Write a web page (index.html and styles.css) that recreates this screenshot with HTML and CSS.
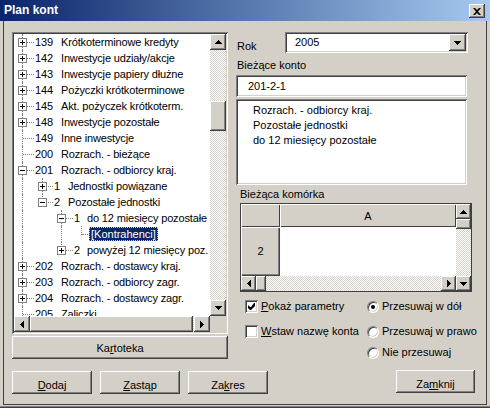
FILE: index.html
```html
<!DOCTYPE html>
<html>
<head>
<meta charset="utf-8">
<title>Plan kont</title>
<link rel="stylesheet" href="styles.css">
</head>
<body>
<div class="window">
  <div class="titlebar">
    <span class="title">Plan kont</span>
    <span class="close"><svg width="8" height="7" viewBox="0 0 8 7"><path d="M0 0h2l2 2 2-2h2L5 3.5 8 7H6L4 5 2 7H0l3-3.5z"/></svg></span>
  </div>
  <div class="client">
    <div class="main">
      <div class="leftcol">
        <div class="tree">
          <div class="tree-body">
            <div class="nodes">
              <div class="row"><i class="c w20 t"><b class="box p"></b></i><span class="lbl"><span class="n1">139</span>Krótkoterminowe kredyty</span></div>
              <div class="row"><i class="c w20 t"><b class="box p"></b></i><span class="lbl"><span class="n1">142</span>Inwestycje udziały/akcje</span></div>
              <div class="row"><i class="c w20 t"><b class="box p"></b></i><span class="lbl"><span class="n1">143</span>Inwestycje papiery dłużne</span></div>
              <div class="row"><i class="c w20 t"><b class="box p"></b></i><span class="lbl"><span class="n1">144</span>Pożyczki krótkoterminowe</span></div>
              <div class="row"><i class="c w20 t"><b class="box p"></b></i><span class="lbl"><span class="n1">145</span>Akt. pożyczek krótkoterm.</span></div>
              <div class="row"><i class="c w20 t"><b class="box p"></b></i><span class="lbl"><span class="n1">148</span>Inwestycje pozostałe</span></div>
              <div class="row"><i class="c w20 t"></i><span class="lbl"><span class="n1">149</span>Inne inwestycje</span></div>
              <div class="row"><i class="c w20 t"></i><span class="lbl"><span class="n1">200</span>Rozrach. - bieżące</span></div>
              <div class="row"><i class="c w20 t"><b class="box m"></b></i><span class="lbl"><span class="n1">201</span>Rozrach. - odbiorcy kraj.</span></div>
              <div class="row"><i class="c w20 v"></i><i class="c w19 t"><b class="box p"></b></i><span class="lbl"><span class="n2">1</span>Jednostki powiązane</span></div>
              <div class="row"><i class="c w20 v"></i><i class="c w19 e"><b class="box m"></b></i><span class="lbl"><span class="n2">2</span>Pozostałe jednostki</span></div>
              <div class="row"><i class="c w20 v"></i><i class="c w19"></i><i class="c w20 t"><b class="box m"></b></i><span class="lbl"><span class="n3">1</span>do 12 miesięcy pozostałe</span></div>
              <div class="row"><i class="c w20 v"></i><i class="c w19"></i><i class="c w20 v"></i><i class="c w19 e"></i><span class="lbl sel">[Kontrahenci]</span></div>
              <div class="row"><i class="c w20 v"></i><i class="c w19"></i><i class="c w20 e"><b class="box p"></b></i><span class="lbl"><span class="n3">2</span>powyżej 12 miesięcy poz.</span></div>
              <div class="row"><i class="c w20 t"><b class="box p"></b></i><span class="lbl"><span class="n1">202</span>Rozrach. - dostawcy kraj.</span></div>
              <div class="row"><i class="c w20 t"><b class="box p"></b></i><span class="lbl"><span class="n1">203</span>Rozrach. - odbiorcy zagr.</span></div>
              <div class="row"><i class="c w20 t"><b class="box p"></b></i><span class="lbl"><span class="n1">204</span>Rozrach. - dostawcy zagr.</span></div>
              <div class="row"><i class="c w20 t"></i><span class="lbl"><span class="n1">205</span>Zaliczki</span></div>
            </div>
            <div class="vscroll">
              <span class="sbtn s16"><svg width="7" height="4" viewBox="0 0 7 4"><path d="M3 0h1v1h1v1h1v1h1v1H0V3h1V2h1V1h1z"/></svg></span>
              <div class="vtrack"><span class="vthumb"></span></div>
              <span class="sbtn s16"><svg width="7" height="4" viewBox="0 0 7 4"><path d="M0 0h7v1H6v1H5v1H4v1H3V3H2V2H1V1H0z"/></svg></span>
            </div>
          </div>
          <div class="hscroll">
            <span class="sbtn s16"><svg width="4" height="7" viewBox="0 0 4 7"><path d="M3 0h1v7H3V6H2V5H1V4H0V3h1V2h1V1h1z"/></svg></span>
            <span class="hthumb"></span>
            <span class="htrack"></span>
            <span class="sbtn s16"><svg width="4" height="7" viewBox="0 0 4 7"><path d="M0 0h1v1h1v1h1v1h1v1H3v1H2v1H1v1H0z"/></svg></span>
            <span class="hcorner"></span>
          </div>
        </div>
        <div class="btn kartoteka">Ka<u>r</u>toteka</div>
      </div>

      <div class="rightcol">
        <div class="rok-row">
          <span class="lbl-rok">Rok</span>
          <div class="combo">
            <span class="combo-val">2005</span>
            <span class="dd"><svg width="7" height="4" viewBox="0 0 7 4"><path d="M0 0h7v1H6v1H5v1H4v1H3V3H2V2H1V1H0z"/></svg></span>
          </div>
        </div>
        <div class="flabel">Bieżące konto</div>
        <div class="textbox">201-2-1</div>
        <div class="textarea">Rozrach. - odbiorcy kraj.<br>Pozostałe jednostki<br>do 12 miesięcy pozostałe</div>
        <div class="flabel cell-label">Bieżąca komórka</div>
        <div class="sheet">
          <div class="sheet-main">
            <div class="sh-hdr"><span class="hcell corner-h"></span><span class="hcell col-h">A</span></div>
            <div class="sh-data"><span class="hcell row-h">2</span><span class="cell"></span></div>
            <div class="sh-hscroll">
              <span class="sbtn s15"><svg width="4" height="7" viewBox="0 0 4 7"><path d="M3 0h1v7H3V6H2V5H1V4H0V3h1V2h1V1h1z"/></svg></span>
              <span class="thumb-h"></span>
              <span class="track"></span>
              <span class="sbtn s15"><svg width="4" height="7" viewBox="0 0 4 7"><path d="M0 0h1v1h1v1h1v1h1v1H3v1H2v1H1v1H0z"/></svg></span>
            </div>
          </div>
          <div class="sh-vscroll">
            <span class="sbtn s15"><svg width="7" height="4" viewBox="0 0 7 4"><path d="M3 0h1v1h1v1h1v1h1v1H0V3h1V2h1V1h1z"/></svg></span>
            <span class="thumb-v"></span>
            <span class="track"></span>
            <span class="sbtn s15"><svg width="7" height="4" viewBox="0 0 7 4"><path d="M0 0h7v1H6v1H5v1H4v1H3V3H2V2H1V1H0z"/></svg></span>
          </div>
        </div>
        <div class="options">
          <label class="opt"><span class="chk"><svg width="7" height="7" viewBox="0 0 7 7"><path d="M6 0h1v3L3 7H2L0 5V2l2 2h1z"/></svg></span><span><u>P</u>okaż parametry</span></label>
          <label class="opt"><span class="radio"><span class="dot"></span></span><span>Przesuwaj w dół</span></label>
          <label class="opt"><span class="chk"></span><span><u>W</u>staw nazwę konta</span></label>
          <label class="opt"><span class="radio"></span><span>Przesuwaj w prawo</span></label>
          <span class="opt"></span>
          <label class="opt"><span class="radio"></span><span>Nie przesuwaj</span></label>
        </div>
      </div>
    </div>
    <div class="bottom">
      <div class="btn b80"><u>D</u>odaj</div>
      <div class="btn b80"><u>Z</u>astąp</div>
      <div class="btn b80">Za<u>k</u>res</div>
      <div class="btn zamknij">Za<u>m</u>knij</div>
    </div>
  </div>
</div>
</body>
</html>
```

FILE: styles.css
```css
* { box-sizing: border-box; margin: 0; padding: 0; }
html, body { width: 490px; height: 408px; overflow: hidden; }
body {
  background: #D4D0C8;
  font-family: "Liberation Sans", Arial, sans-serif;
  font-size: 11px;
  line-height: 13px;
  color: #000;
}
u { text-decoration: underline; text-underline-offset: 1px; }

.window {
  width: 490px;
  height: 408px;
  display: flex;
  flex-direction: column;
  background: #D4D0C8;
  box-shadow: inset 0 -1px #404040, inset 0 -2px #808080;
}

/* title bar */
.titlebar {
  height: 21px;
  flex: none;
  display: flex;
  align-items: center;
  justify-content: space-between;
  background: linear-gradient(to right, #0A246A, #A6CAF0);
  color: #fff;
  font-weight: bold;
  font-size: 12px;
  padding: 0 5px 0 4px;
}
.close {
  width: 16px;
  height: 14px;
  margin-top: 1px;
  display: flex;
  align-items: center;
  justify-content: center;
  background: #D4D0C8;
  box-shadow: inset -1px -1px #404040, inset 1px 1px #fff, inset -2px -2px #808080;
}

/* client area */
.client {
  flex: 1;
  margin: 0 3px 3px 3px;
  border: 1px solid #404040;
  border-top: 0;
  padding: 11px 0 0 8px;
  display: flex;
  flex-direction: column;
}
.main { display: flex; height: 328px; }
.leftcol { width: 216px; display: flex; flex-direction: column; }

/* raised / sunken */
.btn, .sbtn, .vthumb, .hthumb, .thumb-h, .thumb-v, .dd {
  background: #D4D0C8;
  box-shadow: inset -1px -1px #404040, inset 1px 1px #fff, inset -2px -2px #808080;
}
.sbtn, .dd { display: flex; align-items: center; justify-content: center; flex: none; }
.s16 { width: 16px; height: 16px; }
.s15 { width: 15px; height: 15px; }

/* tree */
.tree {
  height: 302px;
  background: #fff;
  padding: 2px;
  display: flex;
  flex-direction: column;
  box-shadow: inset 1px 1px #808080, inset -1px -1px #fff, inset 2px 2px #404040, inset -2px -2px #D4D0C8;
}
.tree-body { display: flex; height: 282px; }
.nodes { flex: 1; overflow: hidden; }
.row { display: flex; height: 16px; align-items: center; white-space: nowrap; }
.c { flex: none; height: 16px; position: relative; align-self: stretch; }
.w20 { width: 20px; }
.w19 { width: 19px; }
.v::before, .t::before, .e::before {
  content: "";
  position: absolute;
  left: 8px;
  top: 0;
  height: 16px;
  border-left: 1px dotted #808080;
}
.e::before { height: 9px; }
.t::after, .e::after {
  content: "";
  position: absolute;
  left: 9px;
  right: 0;
  top: 8px;
  border-top: 1px dotted #808080;
}
.box {
  position: absolute;
  left: 4px;
  top: 4px;
  width: 9px;
  height: 9px;
  border: 1px solid #808080;
  background: #fff;
  z-index: 1;
}
.box::before {
  content: "";
  position: absolute;
  left: 1px;
  top: 3px;
  width: 5px;
  height: 1px;
  background: #000;
}
.box.p::after {
  content: "";
  position: absolute;
  left: 3px;
  top: 1px;
  width: 1px;
  height: 5px;
  background: #000;
}
.lbl { margin-left: -1px; padding: 0 2px; line-height: 16px; letter-spacing: -0.15px; }
.lbl.sel {
  margin-left: -3px;
  line-height: 14px;
  height: 14px;
  letter-spacing: 0;
  background: #0A246A;
  color: #fff;
  outline: 1px dotted #E6CF8A;
  outline-offset: -1px;
}
.n1 { display: inline-block; width: 26px; }
.n2 { display: inline-block; width: 14px; }
.n3 { display: inline-block; width: 13px; }

.vscroll { width: 16px; display: flex; flex-direction: column; }
.vtrack {
  flex: 1;
  background: repeating-conic-gradient(#fff 0 25%, #D4D0C8 0 50%) 0 0 / 2px 2px;
}
.vthumb { display: block; width: 16px; height: 30px; margin-top: 51px; }
.hscroll { display: flex; height: 16px; }
.hthumb { width: 163px; height: 16px; flex: none; }
.htrack { flex: 1; background: repeating-conic-gradient(#fff 0 25%, #D4D0C8 0 50%) 0 0 / 2px 2px; }
.hcorner { width: 16px; height: 16px; background: #D4D0C8; }

.kartoteka {
  margin-top: 2px;
  height: 23px;
  display: flex;
  align-items: center;
  justify-content: center;
  padding-top: 2px;
}

/* right column */
.rightcol { width: 236px; margin-left: 8px; display: flex; flex-direction: column; }
.rok-row { display: flex; height: 21px; }
.lbl-rok { margin-left: 1px; padding-top: 8px; }
.combo {
  margin-left: auto;
  margin-right: 4px;
  width: 183px;
  height: 21px;
  background: #fff;
  padding: 2px;
  display: flex;
  box-shadow: inset 1px 1px #808080, inset -1px -1px #fff, inset 2px 2px #404040, inset -2px -2px #D4D0C8;
}
.combo-val { flex: 1; padding: 2px 0 0 8px; }
.dd { width: 17px; height: 17px; }

.flabel { margin-top: 6px; margin-left: 1px; height: 13px; }
.textbox, .textarea {
  width: 231px;
  background: #fff;
  box-shadow: inset 1px 1px #808080, inset -1px -1px #fff, inset 2px 2px #404040, inset -2px -2px #D4D0C8;
}
.textbox { margin-top: 3px; height: 22px; padding: 5px 0 0 12px; }
.textarea { margin-top: 2px; height: 86px; padding: 4px 0 0 17px; line-height: 15px; }
.cell-label { margin-top: 3px; margin-left: 4px; }

/* spreadsheet */
.sheet {
  margin-top: 2px;
  margin-left: 4px;
  width: 232px;
  height: 89px;
  border: 1px solid #404040;
  display: flex;
}
.sheet-main { width: 215px; display: flex; flex-direction: column; }
.sh-hdr { display: flex; height: 23px; }
.sh-data { display: flex; height: 49px; }
.hcell {
  background: #D4D0C8;
  display: flex;
  align-items: center;
  justify-content: center;
  box-shadow: inset 1px 1px #fff, inset -1px -1px #404040;
}
.corner-h { width: 39px; }
.col-h { width: 176px; padding-top: 1px; }
.row-h { width: 39px; box-shadow: inset 1px 1px #fff, inset -1px -1px #404040, inset -2px -2px #808080; }
.cell { width: 176px; background: #fff; }
.sh-hscroll { display: flex; height: 15px; }
.thumb-h { width: 10px; height: 15px; flex: none; }
.track { flex: 1; background: repeating-conic-gradient(#fff 0 25%, #D4D0C8 0 50%) 0 0 / 2px 2px; }
.sh-vscroll { width: 15px; display: flex; flex-direction: column; }
.thumb-v { width: 15px; height: 10px; flex: none; }

/* options */
.options {
  margin-top: 8px;
  margin-left: 9px;
  display: grid;
  grid-template-columns: 122px auto;
  grid-template-rows: 25px 21px 13px;
}
.opt { display: flex; align-items: flex-start; gap: 3px; white-space: nowrap; }
.chk {
  width: 13px;
  height: 13px;
  flex: none;
  background: #fff;
  display: flex;
  align-items: center;
  justify-content: center;
  box-shadow: inset 1px 1px #808080, inset -1px -1px #fff, inset 2px 2px #404040, inset -2px -2px #D4D0C8;
}
.radio {
  width: 12px;
  height: 12px;
  margin-top: 1px;
  flex: none;
  border-radius: 50%;
  border: 1px solid;
  border-color: #808080 #fff #fff #808080;
  background: #fff;
  display: flex;
  align-items: center;
  justify-content: center;
  box-shadow: inset 1px 1px #404040, inset -1px -1px #D4D0C8;
}
.dot { width: 4px; height: 4px; border-radius: 50%; background: #000; }

/* bottom buttons */
.bottom { display: flex; margin-top: 11px; align-items: flex-start; }
.bottom .btn {
  height: 23px;
  display: flex;
  align-items: center;
  justify-content: center;
  padding-top: 5px;
}
.b80 { width: 80px; margin-right: 8px; }
.zamknij { width: 79px; margin-left: auto; margin-right: 11px; margin-top: -1px; }
```
